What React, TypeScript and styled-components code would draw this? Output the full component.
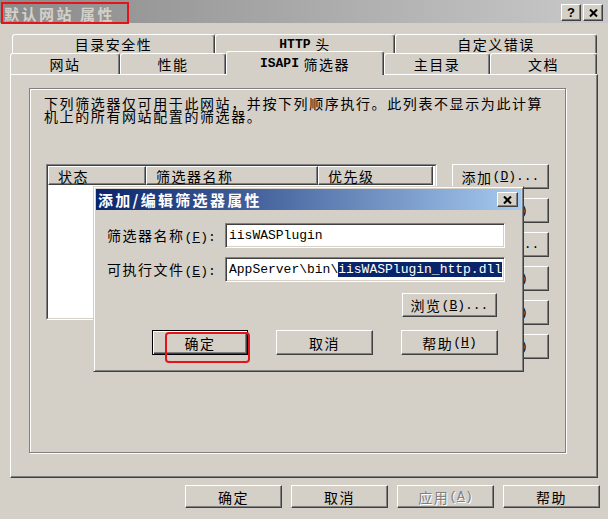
import * as React from 'react'
import styled, { createGlobalStyle, css } from 'styled-components'

const FACE = '#d4d0c8'

const GlobalStyle = createGlobalStyle`
  html, body {
    margin: 0;
    padding: 0;
    background: ${FACE};
  }
  body {
    font-family: "Noto Sans CJK SC", "Liberation Sans", sans-serif;
  }
  * {
    box-sizing: border-box;
  }
`

const raised = css`
  border: 1px solid;
  border-color: #fff #404040 #404040 #fff;
  box-shadow: inset -1px -1px #808080, inset 1px 1px ${FACE};
`

const Window = styled.div`
  position: relative;
  width: 608px;
  height: 519px;
  overflow: hidden;
  background: ${FACE};
  color: #000;
  font-size: 14px;
  letter-spacing: 1.5px;
`

const Mono = styled.span<{ $bold?: boolean }>`
  font-family: "Liberation Mono", "Courier New", monospace;
  font-size: 13px;
  letter-spacing: 0;
  font-weight: ${p => (p.$bold ? 700 : 400)};
`

/* ---- caption ---- */
const TitleBar = styled.div`
  height: 23px;
  display: flex;
  justify-content: space-between;
  padding: 0 5px 0 1px;
  background: linear-gradient(to right, #8a8a8a, #c9c9c9);
`

const TitleText = styled.div`
  height: 22px;
  margin-top: 2px;
  padding: 0 12px 0 1px;
  display: flex;
  align-items: center;
  border: 2px solid #e5141b;
  color: ${FACE};
  font-size: 15px;
  font-weight: 700;
  letter-spacing: 2.5px;
  line-height: 1;
  white-space: nowrap;
`

const CaptionButtons = styled.div`
  display: flex;
  gap: 2px;
  padding-top: 4px;
`

const CaptionButton = styled.div<{ $w: number; $h: number }>`
  ${raised};
  width: ${p => p.$w}px;
  height: ${p => p.$h}px;
  background: ${FACE};
  display: flex;
  align-items: center;
  justify-content: center;
  font-family: "Liberation Sans", sans-serif;
  font-weight: 700;
  font-size: 13px;
  letter-spacing: 0;
  line-height: 1;
  color: #000;
`

/* ---- tabs + panel ---- */
const Body = styled.div`
  padding: 11px 10px 0 10px;
`

const TabRow = styled.div<{ $indent?: number }>`
  display: flex;
  align-items: flex-end;
  padding-left: ${p => p.$indent ?? 0}px;
`

const Tab = styled.div<{ $w: number; $h: number; $active?: boolean }>`
  position: relative;
  width: ${p => p.$w}px;
  height: ${p => p.$h}px;
  display: flex;
  align-items: center;
  justify-content: center;
  background: ${FACE};
  border-top: 1px solid #fff;
  border-left: 1px solid #fff;
  border-right: 1px solid #404040;
  border-radius: 3px 3px 0 0;
  box-shadow: inset -1px 0 #808080;
  line-height: 1;
  white-space: nowrap;
  ${p =>
    p.$active &&
    css`
      z-index: 2;
      margin-top: -3px;
      margin-bottom: -1px;
    `}
`

const Panel = styled.div`
  height: 404px;
  padding: 13px 0 0 18px;
  border: 1px solid;
  border-color: #fff #404040 #404040 #fff;
  box-shadow: inset -1px -1px #808080;
`

const GroupBox = styled.div`
  width: 537px;
  height: 365px;
  padding-top: 8px;
  border: 1px solid #808080;
  box-shadow: inset 1px 1px #fff, 1px 1px #fff;
`

const Description = styled.div`
  padding-left: 14px;
  line-height: 13px;
  letter-spacing: 1.6px;
  white-space: nowrap;
`

const ListArea = styled.div`
  display: flex;
  align-items: flex-start;
  gap: 15px;
  margin-top: 41px;
  padding-left: 16px;
`

const ListOuter = styled.div`
  width: 391px;
  height: 156px;
  border: 1px solid;
  border-color: #808080 #fff #fff #808080;
`

const ListInner = styled.div`
  height: 100%;
  background: #fff;
  border: 1px solid;
  border-color: #404040 ${FACE} ${FACE} #404040;
`

const HeaderRow = styled.div`
  display: flex;
  height: 19px;
`

const HeaderCell = styled.div<{ $w: number }>`
  ${raised};
  width: ${p => p.$w}px;
  height: 19px;
  padding-left: 9px;
  background: ${FACE};
  display: flex;
  align-items: center;
  line-height: 1;
`

const SideButtons = styled.div`
  display: flex;
  flex-direction: column;
  gap: 9px;
`

const Button = styled.button<{ $w: number; $h: number; $default?: boolean; $disabled?: boolean }>`
  ${raised};
  position: relative;
  width: ${p => p.$w}px;
  height: ${p => p.$h}px;
  padding: 0;
  background: ${FACE};
  font: inherit;
  letter-spacing: 1.5px;
  line-height: 1;
  color: ${p => (p.$disabled ? '#808080' : '#000')};
  text-shadow: ${p => (p.$disabled ? '1px 1px #fff' : 'none')};
  display: flex;
  align-items: center;
  justify-content: center;
  white-space: nowrap;
  ${p =>
    p.$default &&
    css`
      border-color: #000;
      box-shadow: inset 1px 1px #fff, inset -1px -1px #404040, inset -2px -2px #808080;
    `}
`

const Annotation = styled.span`
  position: absolute;
  left: 12px;
  top: 1px;
  width: 85px;
  height: 31px;
  border: 2px solid #e5141b;
  border-radius: 4px;
  pointer-events: none;
`

const BottomBar = styled.div`
  display: flex;
  justify-content: flex-end;
  gap: 9px;
  padding: 7px 8px 0 0;
`

/* ---- modal dialog ---- */
const Dialog = styled.div`
  position: absolute;
  left: 93px;
  top: 186px;
  width: 431px;
  height: 186px;
  padding: 2px;
  background: ${FACE};
  border: 1px solid;
  border-color: ${FACE} #404040 #404040 ${FACE};
  box-shadow: inset 1px 1px #fff, inset -1px -1px #808080;
  z-index: 5;
`

const DialogTitle = styled.div`
  height: 21px;
  display: flex;
  align-items: center;
  justify-content: space-between;
  padding: 0 3px 0 2px;
  background: linear-gradient(to right, #0a246a, #a6caf0);
  color: #fff;
  font-size: 15px;
  font-weight: 700;
  letter-spacing: 2.3px;
  line-height: 1;
`

const DialogBody = styled.div`
  padding: 13px 0 0 11px;
`

const FieldRow = styled.div<{ $gap?: number }>`
  display: flex;
  align-items: center;
  margin-top: ${p => p.$gap ?? 0}px;
`

const Label = styled.div`
  width: 118px;
  line-height: 1;
  white-space: nowrap;
`

const Input = styled.div`
  width: 280px;
  height: 25px;
  padding-left: 3px;
  display: flex;
  align-items: center;
  overflow: hidden;
  white-space: nowrap;
  background: #fff;
  border: 1px solid;
  border-color: #808080 #fff #fff #808080;
  box-shadow: inset 1px 1px #404040, inset -1px -1px ${FACE};
`

const Selected = styled.span`
  background: #0a246a;
  color: #fff;
`

const ActionRow = styled.div<{ $top: number; $right: number; $gap?: number }>`
  display: flex;
  justify-content: flex-end;
  gap: ${p => p.$gap ?? 0}px;
  margin-top: ${p => p.$top}px;
  padding-right: ${p => p.$right}px;
`

const CloseIcon = () => (
  <svg width="9" height="8" viewBox="0 0 9 8">
    <path d="M1 0.5 L8 7.5 M8 0.5 L1 7.5" stroke="#000" strokeWidth="2" />
  </svg>
)

const sideButtons: [string, string, string][] = [
  ['添加', 'D', '...'],
  ['删除', 'R', ''],
  ['编辑', 'I', '...'],
  ['禁用', 'B', ''],
  ['上移', 'U', ''],
  ['下移', 'N', ''],
]

const Accel = ({ k, tail = '' }: { k: string; tail?: string }) => (
  <Mono>
    (<u>{k}</u>){tail}
  </Mono>
)

export default function App() {
  return (
    <>
      <GlobalStyle />
      <Window>
        <TitleBar>
          <TitleText>默认网站 属性</TitleText>
          <CaptionButtons>
            <CaptionButton $w={20} $h={17}>?</CaptionButton>
            <CaptionButton $w={20} $h={17}>
              <CloseIcon />
            </CaptionButton>
          </CaptionButtons>
        </TitleBar>

        <Body>
          <TabRow $indent={2}>
            <Tab $w={203} $h={19}>目录安全性</Tab>
            <Tab $w={180} $h={19}>
              <Mono $bold>HTTP</Mono>&nbsp;头
            </Tab>
            <Tab $w={202} $h={19}>自定义错误</Tab>
          </TabRow>
          <TabRow>
            <Tab $w={110} $h={21}>网站</Tab>
            <Tab $w={106} $h={21}>性能</Tab>
            <Tab $w={158} $h={24} $active>
              <Mono $bold>ISAPI</Mono>&nbsp;筛选器
            </Tab>
            <Tab $w={106} $h={21}>主目录</Tab>
            <Tab $w={107} $h={21}>文档</Tab>
          </TabRow>

          <Panel>
            <GroupBox>
              <Description>
                下列筛选器仅可用于此网站，并按下列顺序执行。此列表不显示为此计算
                <br />
                机上的所有网站配置的筛选器。
              </Description>
              <ListArea>
                <ListOuter>
                  <ListInner>
                    <HeaderRow>
                      <HeaderCell $w={98}>状态</HeaderCell>
                      <HeaderCell $w={172}>筛选器名称</HeaderCell>
                      <HeaderCell $w={115}>优先级</HeaderCell>
                    </HeaderRow>
                  </ListInner>
                </ListOuter>
                <SideButtons>
                  {sideButtons.map(([label, key, tail]) => (
                    <Button key={key} $w={97} $h={25}>
                      {label}
                      <Accel k={key} tail={tail} />
                    </Button>
                  ))}
                </SideButtons>
              </ListArea>
            </GroupBox>
          </Panel>
        </Body>

        <BottomBar>
          <Button $w={97} $h={23}>确定</Button>
          <Button $w={97} $h={23}>取消</Button>
          <Button $w={97} $h={23} $disabled>
            应用
            <Accel k="A" />
          </Button>
          <Button $w={97} $h={23}>帮助</Button>
        </BottomBar>

        <Dialog>
          <DialogTitle>
            <span>添加/编辑筛选器属性</span>
            <CaptionButton $w={21} $h={15}>
              <CloseIcon />
            </CaptionButton>
          </DialogTitle>
          <DialogBody>
            <FieldRow>
              <Label>
                筛选器名称
                <Accel k="F" tail=":" />
              </Label>
              <Input>
                <Mono>iisWASPlugin</Mono>
              </Input>
            </FieldRow>
            <FieldRow $gap={9}>
              <Label>
                可执行文件
                <Accel k="E" tail=":" />
              </Label>
              <Input>
                <Mono>
                  AppServer\bin\<Selected>iisWASPlugin_http.dll</Selected>
                </Mono>
              </Input>
            </FieldRow>
            <ActionRow $top={11} $right={24}>
              <Button $w={95} $h={24}>
                浏览
                <Accel k="B" tail="..." />
              </Button>
            </ActionRow>
            <ActionRow $top={13} $right={23} $gap={28}>
              <Button $w={96} $h={25} $default>
                确定
                <Annotation />
              </Button>
              <Button $w={97} $h={25}>取消</Button>
              <Button $w={97} $h={25}>
                帮助
                <Accel k="H" />
              </Button>
            </ActionRow>
          </DialogBody>
        </Dialog>
      </Window>
    </>
  )
}
